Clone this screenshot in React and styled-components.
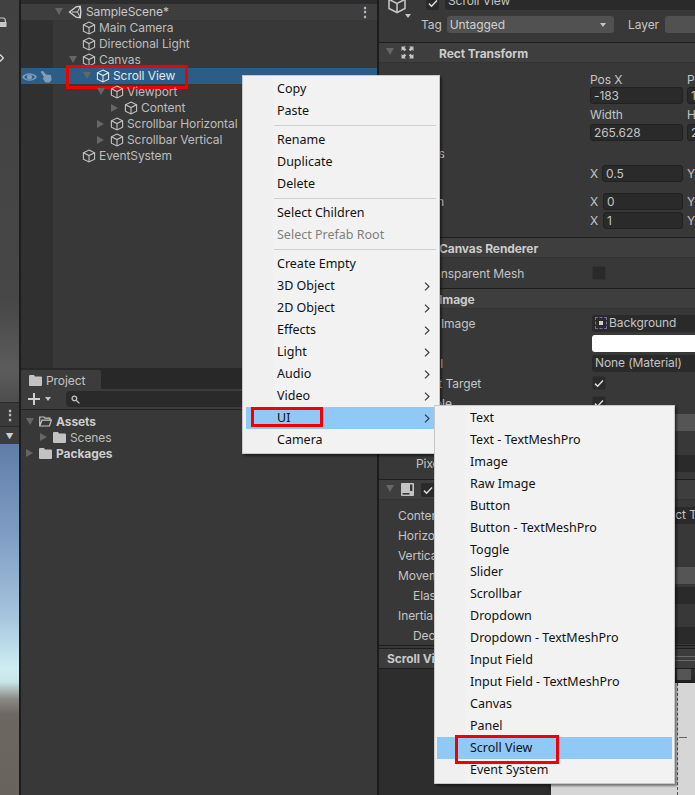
import React from "react";
import styled, { createGlobalStyle } from "styled-components";

const GlobalStyle = createGlobalStyle`
  html, body {
    margin: 0;
    padding: 0;
    background: #282828;
  }
`;

const CubeIcon = ({ size = 14, color = "#c4c4c4" }) => (
  <svg width={size} height={size} viewBox="0 0 14 14" fill="none" stroke={color} strokeWidth="1.1">
    <path d="M7 1 L12.6 3.8 V10.2 L7 13 L1.4 10.2 V3.8 Z" />
    <path d="M1.4 3.8 L7 6.6 L12.6 3.8 M7 6.6 V13" />
  </svg>
);

const UnityIcon = () => (
  <svg width="14" height="14" viewBox="0 0 14 14" fill="none" stroke="#d4d4d4" strokeWidth="1.4">
    <path d="M1.5 7 L8.2 1.8 L12.2 1.2 L12.8 7 L12.2 12.8 L8.2 12.2 Z" />
    <path d="M4 7 H9.5 L12.2 1.6 M9.5 7 L12.2 12.4" strokeWidth="1" />
  </svg>
);

const EyeIcon = () => (
  <svg width="15" height="10" viewBox="0 0 15 10" fill="#7d9cb8">
    <path d="M0 5 C3 0 12 0 15 5 C12 10 3 10 0 5 Z M2 5 C4.5 8.4 10.5 8.4 13 5 C10.5 1.6 4.5 1.6 2 5 Z" />
    <circle cx="7.5" cy="5" r="2.6" />
  </svg>
);

const HandIcon = () => (
  <svg width="12" height="12" viewBox="0 0 12 12" fill="#7d9cb8">
    <path d="M0.5 0.5 L3 0 L6 3.4 L11 4 L11.6 9 L9.6 11.6 H5.4 L2.6 7.2 L4 6.6 Z" />
  </svg>
);

const FolderIcon = ({ open }) => (
  <svg width="13" height="11" viewBox="0 0 13 11" fill={open ? "none" : "#c2c2c2"} stroke={open ? "#c2c2c2" : "none"}>
    {open ? (
      <path d="M0.7 10 V1 H5 L6 2.2 H11 V4 M0.7 10 L3 4.2 H12.4 L10.4 10 Z" strokeWidth="1.2" />
    ) : (
      <path d="M0 1 Q0 0 1 0 H5 L6 1.4 H12 Q13 1.4 13 2.4 V10 Q13 11 12 11 H1 Q0 11 0 10 Z" />
    )}
  </svg>
);

const RectIcon = () => (
  <svg width="13" height="13" viewBox="0 0 13 13" fill="#c4c4c4">
    <path d="M0.5 0.5 H5 L3.7 1.8 L5.2 3.6 L3.6 5.2 L1.8 3.7 L0.5 5 Z" />
    <path d="M12.5 0.5 H8 L9.3 1.8 L7.8 3.6 L9.4 5.2 L11.2 3.7 L12.5 5 Z" />
    <path d="M0.5 12.5 H5 L3.7 11.2 L5.2 9.4 L3.6 7.8 L1.8 9.3 L0.5 8 Z" />
    <path d="M12.5 12.5 H8 L9.3 11.2 L7.8 9.4 L9.4 7.8 L11.2 9.3 L12.5 8 Z" />
  </svg>
);

const ScrollIcon = () => (
  <svg width="13" height="13" viewBox="0 0 13 13">
    <rect width="13" height="13" rx="1" fill="#c4c4c4" />
    <rect x="9" y="1.5" width="2.4" height="6.5" fill="#383838" />
    <rect x="1.5" y="10" width="7" height="1.6" fill="#383838" />
  </svg>
);

const SearchIcon = () => (
  <svg width="9" height="9" viewBox="0 0 9 9" fill="none" stroke="#c4c4c4" strokeWidth="1.3">
    <circle cx="3.4" cy="3.4" r="2.3" />
    <path d="M5.2 5.2 L8.4 8.4" />
  </svg>
);

const CheckIcon = () => (
  <svg width="10" height="9" viewBox="0 0 10 9" fill="none" stroke="#dcdcdc" strokeWidth="1.5">
    <path d="M1 4.6 L3.6 7.2 L9 1.4" />
  </svg>
);

const Chevron = () => (
  <svg width="6" height="9" viewBox="0 0 6 9" fill="none" stroke="#333" strokeWidth="1.1">
    <path d="M1 0.6 L5 4.5 L1 8.4" />
  </svg>
);

const LockMark = () => (
  <svg width="7" height="10" viewBox="0 0 7 10">
    <path d="M0 1 H3 Q5.4 1 5.4 4 V5" fill="none" stroke="#c8c8c8" strokeWidth="1.2" />
    <rect x="0" y="5" width="6.5" height="5" fill="#c8c8c8" />
  </svg>
);

const CloseMark = () => (
  <svg width="4" height="8" viewBox="0 0 4 8" fill="none" stroke="#e0e0e0" strokeWidth="1.3">
    <path d="M0 0.5 L3.4 4 L0 7.5 M3.4 0.5 L3.4 0.5" />
  </svg>
);

const Page = styled.div`
  position: relative;
  display: flex;
  width: 695px;
  height: 795px;
  overflow: hidden;
  font-family: Inter, "Liberation Sans", sans-serif;
  font-size: 12px;
  letter-spacing: -0.08px;
  color: #c4c4c4;
`;

const SceneStrip = styled.div`
  display: flex;
  flex-direction: column;
  width: 19px;
  flex: none;
`;

const SceneGrey = styled.div`
  height: 402px;
  flex: none;
  display: flex;
  flex-direction: column;
  align-items: flex-start;
  padding-top: 17px;
  box-sizing: border-box;
  gap: 27px;
  background: linear-gradient(#414141, #474747 300px, #5c5c5c 370px, #4e4e4e 400px);
`;

const StripBar = styled.div`
  height: 23px;
  flex: none;
  background: #3a3a3a;
  border-top: 1px solid #2a2a2a;
  display: flex;
  align-items: center;
  justify-content: center;
  color: #c4c4c4;
  font-size: 14px;
  font-weight: 700;
`;

const StripBar2 = styled.div`
  height: 17px;
  flex: none;
  background: #3c3c3c;
  border-top: 1px solid #2a2a2a;
  display: flex;
  align-items: center;
  justify-content: center;
  color: #d0d0d0;
  font-size: 8px;
`;

const SkyView = styled.div`
  flex: 1;
  background: linear-gradient(
    #5f7da8 0,
    #7f9dc4 90px,
    #a4c3dc 170px,
    #cfeef2 225px,
    #c8e4e6 238px,
    #8a8a84 255px,
    #6d6762 270px,
    #69635e 100%
  );
`;

const LeftColumn = styled.div`
  width: 360px;
  flex: none;
  display: flex;
  flex-direction: column;
  border-left: 2px solid #1c1c1c;
  border-right: 2px solid #1c1c1c;
  box-sizing: border-box;
`;

const Hierarchy = styled.div`
  height: 368px;
  flex: none;
  padding-top: 4px;
  box-sizing: border-box;
  background: #2c2c2c;
  display: flex;
  flex-direction: column;
`;

const SceneRow = styled.div`
  height: 16px;
  flex: none;
  display: flex;
  align-items: center;
  padding-left: 34px;
  padding-bottom: 1px;
  box-sizing: border-box;
  background: #3e3e3e;
  color: #c8c8c8;
`;

const SceneDots = styled.span`
  margin-left: auto;
  margin-right: 6px;
  font-weight: 700;
  line-height: 1;
`;

const TreeBody = styled.div`
  flex: 1;
  background: linear-gradient(90deg, #303030 32px, #383838 32px);
`;

const Row = styled.div`
  position: relative;
  height: 16px;
  box-sizing: border-box;
  display: flex;
  align-items: center;
  padding-left: ${(p) => 48 + p.$depth * 14}px;
  padding-bottom: 1px;
  background: ${(p) => (p.$selected ? "#2c5d87" : "transparent")};
  color: ${(p) => (p.$selected ? "#e6e6e6" : "#bdbdbd")};
  white-space: nowrap;
`;

const Foldout = styled.span`
  width: 13px;
  flex: none;
  display: inline-flex;
  align-items: center;
  &::before {
    content: "";
    ${(p) =>
      p.$open
        ? `border-left: 4px solid transparent;
           border-right: 4px solid transparent;
           border-top: 7px solid #666;`
        : p.$closed
        ? `border-top: 4px solid transparent;
           border-bottom: 4px solid transparent;
           border-left: 7px solid #666;`
        : ""}
  }
`;

const RowIcon = styled.span`
  display: inline-flex;
  margin-right: ${(p) => p.$gap ?? 3}px;
`;

const RowGutter = styled.span`
  position: absolute;
  left: 1px;
  top: 3px;
  display: flex;
  gap: 3px;
  align-items: center;
`;

const RedBox = styled.span`
  position: absolute;
  left: ${(p) => p.$l}px;
  top: ${(p) => p.$t}px;
  width: ${(p) => p.$w}px;
  height: ${(p) => p.$h}px;
  border: 3px solid #f00000;
  box-sizing: border-box;
  pointer-events: none;
`;

const Project = styled.div`
  flex: 1;
  margin-top: 2px;
  display: flex;
  flex-direction: column;
  background: #383838;
`;

const TabStrip = styled.div`
  height: 19px;
  flex: none;
  background: #282828;
  display: flex;
`;

const Tab = styled.div`
  width: 80px;
  display: flex;
  align-items: center;
  gap: 4px;
  padding: 1px 0 0 8px;
  box-sizing: border-box;
  background: #3c3c3c;
  border-radius: 2px 2px 0 0;
`;

const ProjectBar = styled.div`
  height: 21px;
  flex: none;
  display: flex;
  align-items: center;
  padding-left: 7px;
  background: #3c3c3c;
  border-bottom: 1px solid #232323;
  box-sizing: border-box;
`;

const PlusMark = styled.span`
  width: 12px;
  height: 12px;
  flex: none;
  background:
    linear-gradient(#cfcfcf, #cfcfcf) center / 12px 2px no-repeat,
    linear-gradient(#cfcfcf, #cfcfcf) center / 2px 12px no-repeat;
`;

const SmallArrow = styled.span`
  margin-left: 5px;
  border-left: 3.5px solid transparent;
  border-right: 3.5px solid transparent;
  border-top: 4px solid ${(p) => p.$color || "#c4c4c4"};
`;

const SearchField = styled.div`
  flex: 1;
  height: 16px;
  margin-left: 15px;
  padding-left: 5px;
  display: flex;
  align-items: center;
  background: #2a2a2a;
  border-radius: 4px;
`;

const FileTree = styled.div`
  padding-top: 3px;
`;

const FileRow = styled.div`
  height: 16px;
  display: flex;
  align-items: center;
  padding-left: ${(p) => 5 + p.$depth * 14}px;
  font-weight: ${(p) => (p.$bold ? 700 : 400)};
  color: ${(p) => (p.$bold ? "#cdcdcd" : "#bdbdbd")};
`;

const Inspector = styled.div`
  flex: 1;
  min-width: 0;
  display: flex;
  flex-direction: column;
  background: #383838;
  overflow: hidden;
`;

const NameRow = styled.div`
  height: 10px;
  flex: none;
  display: flex;
  align-items: flex-end;
  padding-left: 47px;
  position: relative;
`;

const NameCheck = styled.span`
  width: 13px;
  height: 16px;
  flex: none;
  background: #2a2a2a;
  border-radius: 2px;
  display: flex;
  align-items: flex-end;
  justify-content: center;
  padding-bottom: 2px;
  box-sizing: border-box;
`;

const NameField = styled.div`
  flex: 1;
  height: 16px;
  margin-left: 6px;
  padding-left: 3px;
  line-height: 13px;
  background: #2a2a2a;
  border-radius: 3px 0 0 3px;
  font-size: 12px;
`;

const TopCube = styled.span`
  position: absolute;
  left: 8px;
  top: -6px;
`;

const CubeArrow = styled.span`
  position: absolute;
  left: 26px;
  top: 14px;
  border-left: 3.5px solid transparent;
  border-right: 3.5px solid transparent;
  border-top: 4px solid #c4c4c4;
`;

const TagRow = styled.div`
  height: 18px;
  margin-top: 6px;
  margin-bottom: 8px;
  flex: none;
  display: flex;
  align-items: center;
  padding: 0 0 1px 42px;
  box-sizing: border-box;
`;

const TagSelect = styled.div`
  width: 194px;
  height: 17px;
  margin-left: 5px;
  padding: 0 8px 0 3px;
  box-sizing: border-box;
  display: flex;
  align-items: center;
  justify-content: space-between;
  background: #515151;
  border-radius: 3px;
  color: #d0d0d0;
`;

const LayerLabel = styled.span`
  margin-left: 14px;
`;

const LayerBox = styled.span`
  width: 30px;
  height: 17px;
  margin-left: 6px;
  flex: none;
  background: #515151;
  border-radius: 3px 0 0 3px;
`;

const SectionHead = styled.div`
  height: 21px;
  flex: none;
  box-sizing: border-box;
  display: flex;
  align-items: center;
  position: relative;
  background: #3e3e3e;
  border-top: 1px solid #1e1e1e;
  border-bottom: 1px solid #333;
  padding-left: ${(p) => p.$pad ?? 60}px;
  padding-top: 1px;
  font-weight: 700;
  color: #cbcbcb;
`;

const HeadArrow = styled.span`
  position: absolute;
  left: 7px;
  top: 5px;
  border-left: 4px solid transparent;
  border-right: 4px solid transparent;
  border-top: 7px solid #666;
`;

const HeadIcon = styled.span`
  position: absolute;
  left: 22px;
  top: 3px;
  display: flex;
`;

const HeadCheck = styled.span`
  position: absolute;
  left: 42px;
  top: 3px;
  width: 14px;
  height: 14px;
  background: #2a2a2a;
  border-radius: 2px;
  display: flex;
  align-items: center;
  justify-content: center;
`;

const RectBody = styled.div`
  height: 174px;
  flex: none;
  display: grid;
  grid-template-columns: 188px 93px 60px;
  column-gap: 4px;
  grid-template-rows: 14px 19px 18px 19px 22px 18px 10px 19px 19px;
  padding: 9px 0 0 19px;
  box-sizing: border-box;
  align-items: center;
`;

const Axis = styled.div`
  display: flex;
  align-items: center;
  gap: ${(p) => p.$gap ?? 4}px;
`;

const Field = styled.div`
  flex: 1;
  min-width: 0;
  height: 17px;
  padding-left: 3px;
  line-height: 16px;
  white-space: nowrap;
  overflow: hidden;
  box-sizing: border-box;
  background: ${(p) => p.$bg || "#2a2a2a"};
  color: ${(p) => p.$color || "#c4c4c4"};
  border-radius: 3px;
  border: 1px solid #212121;
`;

const Prop = styled.div`
  height: ${(p) => p.$h ?? 20}px;
  flex: none;
  display: grid;
  grid-template-columns: ${(p) => 194 - (p.$indent ?? 19) + 19}px 1fr;
  align-items: center;
  padding-left: ${(p) => p.$indent ?? 19}px;
  white-space: nowrap;
`;

const PropField = styled(Field)`
  width: 120px;
  flex: none;
  border: none;
  display: flex;
  align-items: center;
  gap: 2px;
`;

const CheckBox = styled.span`
  width: 14px;
  height: 14px;
  display: flex;
  align-items: center;
  justify-content: center;
  background: #2a2a2a;
  border-radius: 2px;
  border: 1px solid #313131;
  box-sizing: border-box;
`;

const SpriteDot = styled.span`
  width: 10px;
  height: 10px;
  flex: none;
  border: 1px dashed #7c68a8;
  display: flex;
  align-items: center;
  justify-content: center;
  &::after {
    content: "";
    width: 4px;
    height: 4px;
    background: #cfcfcf;
  }
`;

const Gap = styled.div`
  height: ${(p) => p.$h}px;
  flex: none;
`;

const Divider = styled.div`
  height: 1px;
  flex: none;
  background: #1e1e1e;
`;

const PreviewBar = styled.div`
  height: 21px;
  flex: none;
  margin-top: 2px;
  display: flex;
  align-items: center;
  padding: 0 0 1px 8px;
  background: #3c3c3c;
  border-top: 1px solid #1e1e1e;
  border-bottom: 1px solid #1e1e1e;
  box-sizing: border-box;
  font-weight: 700;
  color: #c8c8c8;
`;

const BarGrip = styled.span`
  margin-left: auto;
  width: 20px;
  height: 3px;
  border-top: 1px solid #6a6a6a;
  border-bottom: 1px solid #6a6a6a;
`;

const Preview = styled.div`
  flex: 1;
  display: flex;
  background: #2d2d2d;
  padding: 14px 0 0 172px;
  overflow: hidden;
`;

const PreviewSheet = styled.div`
  flex: 1;
  position: relative;
  background: #d6d6d6;
  border-radius: 14px 0 0 0;
  box-shadow: 0 -3px 5px #1a1a1a;
`;

const PreviewChip = styled.span`
  position: absolute;
  left: 126px;
  top: -14px;
  width: 14px;
  height: 11px;
  background: #555;
`;

const DashLine = styled.span`
  position: absolute;
  left: 126px;
  top: 0;
  bottom: 0;
  border-left: 1px dashed #555;
`;

const CrossTick = styled.span`
  position: absolute;
  left: 128px;
  top: 54px;
  width: 8px;
  height: 1px;
  background: #666;
`;

const Menu = styled.div`
  position: absolute;
  left: ${(p) => p.$x}px;
  top: ${(p) => p.$y}px;
  width: ${(p) => p.$w}px;
  padding: ${(p) => p.$padTop}px 2px 2px ${(p) => p.$padLeft}px;
  box-sizing: border-box;
  background: linear-gradient(90deg, #f0f0f0 30px, #f2f2f2 30px);
  border: 1px solid #c8c8c8;
  box-shadow: 2px 2px 2px rgba(0, 0, 0, 0.45);
  font-family: "Noto Sans", "Open Sans", sans-serif;
  font-size: 12.5px;
  letter-spacing: 0;
  color: #111;
`;

const MenuItem = styled.div`
  position: relative;
  height: 22px;
  line-height: 22px;
  padding-left: ${(p) => p.$indent}px;
  display: flex;
  align-items: center;
  justify-content: space-between;
  padding-right: 7px;
  background: ${(p) => (p.$active ? "#90c8f6" : "transparent")};
  color: ${(p) => (p.$disabled ? "#7f7f7f" : "#111")};
  white-space: nowrap;
`;

const MenuRule = styled.div`
  height: 1px;
  margin: 3px 1px 3px 28px;
  background: #d0d0d0;
`;

const tree = [
  { name: "Main Camera", depth: 0 },
  { name: "Directional Light", depth: 0 },
  { name: "Canvas", depth: 0, open: true },
  { name: "Scroll View", depth: 1, open: true, selected: true },
  { name: "Viewport", depth: 2, open: true },
  { name: "Content", depth: 3, closed: true },
  { name: "Scrollbar Horizontal", depth: 2, closed: true },
  { name: "Scrollbar Vertical", depth: 2, closed: true },
  { name: "EventSystem", depth: 0 },
];

const contextMenu = [
  ["Copy", "Paste"],
  ["Rename", "Duplicate", "Delete"],
  ["Select Children", "Select Prefab Root"],
  ["Create Empty", "3D Object", "2D Object", "Effects", "Light", "Audio", "Video", "UI", "Camera"],
];

const withArrow = ["3D Object", "2D Object", "Effects", "Light", "Audio", "Video", "UI"];

const uiMenu = [
  "Text",
  "Text - TextMeshPro",
  "Image",
  "Raw Image",
  "Button",
  "Button - TextMeshPro",
  "Toggle",
  "Slider",
  "Scrollbar",
  "Dropdown",
  "Dropdown - TextMeshPro",
  "Input Field",
  "Input Field - TextMeshPro",
  "Canvas",
  "Panel",
  "Scroll View",
  "Event System",
];

export default function App() {
  return (
    <Page>
      <GlobalStyle />
      <SceneStrip>
        <SceneGrey>
          <LockMark />
          <CloseMark />
        </SceneGrey>
        <StripBar>⋮</StripBar>
        <StripBar2>▼</StripBar2>
        <SkyView />
      </SceneStrip>

      <LeftColumn>
        <Hierarchy>
          <SceneRow>
            <Foldout $open />
            <RowIcon $gap={4}>
              <UnityIcon />
            </RowIcon>
            SampleScene*
            <SceneDots>⋮</SceneDots>
          </SceneRow>
          <TreeBody>
            {tree.map((item) => (
              <Row key={item.name} $depth={item.depth} $selected={item.selected}>
                {item.selected && (
                  <RowGutter>
                    <EyeIcon />
                    <HandIcon />
                  </RowGutter>
                )}
                <Foldout $open={item.open} $closed={item.closed} />
                <RowIcon>
                  <CubeIcon color={item.selected ? "#e6e6e6" : "#c4c4c4"} />
                </RowIcon>
                {item.name}
                {item.selected && <RedBox $l={45} $t={-3} $w={122} $h={24} />}
              </Row>
            ))}
          </TreeBody>
        </Hierarchy>

        <Project>
          <TabStrip>
            <Tab>
              <FolderIcon />
              Project
            </Tab>
          </TabStrip>
          <ProjectBar>
            <PlusMark />
            <SmallArrow />
            <SearchField>
              <SearchIcon />
            </SearchField>
          </ProjectBar>
          <FileTree>
            <FileRow $depth={0} $bold>
              <Foldout $open />
              <RowIcon $gap={4}>
                <FolderIcon open />
              </RowIcon>
              Assets
            </FileRow>
            <FileRow $depth={1}>
              <Foldout $closed />
              <RowIcon $gap={4}>
                <FolderIcon />
              </RowIcon>
              Scenes
            </FileRow>
            <FileRow $depth={0} $bold>
              <Foldout $closed />
              <RowIcon $gap={4}>
                <FolderIcon />
              </RowIcon>
              Packages
            </FileRow>
          </FileTree>
        </Project>
      </LeftColumn>

      <Inspector>
        <NameRow>
          <TopCube>
            <CubeIcon size={20} />
          </TopCube>
          <CubeArrow />
          <NameCheck>
            <CheckIcon />
          </NameCheck>
          <NameField>Scroll View</NameField>
        </NameRow>
        <TagRow>
          Tag
          <TagSelect>
            Untagged
            <SmallArrow />
          </TagSelect>
          <LayerLabel>Layer</LayerLabel>
          <LayerBox />
        </TagRow>

        <SectionHead>
          <HeadArrow />
          <HeadIcon>
            <RectIcon />
          </HeadIcon>
          Rect Transform
        </SectionHead>
        <RectBody>
          <span />
          <span>Pos X</span>
          <span>Pos Y</span>
          <span />
          <Field>-183</Field>
          <Field>1</Field>
          <span />
          <span>Width</span>
          <span>Height</span>
          <span />
          <Field>265.628</Field>
          <Field>2</Field>
          <span>Anchors</span>
          <span />
          <span />
          <span>Pivot</span>
          <Axis>
            X
            <Field>0.5</Field>
          </Axis>
          <span>Y</span>
          <span />
          <span />
          <span />
          <span>Rotation</span>
          <Axis $gap={5}>
            X
            <Field>0</Field>
          </Axis>
          <span>Y</span>
          <span>Scale</span>
          <Axis $gap={5}>
            X
            <Field>1</Field>
          </Axis>
          <span>Y</span>
        </RectBody>

        <SectionHead>Canvas Renderer</SectionHead>
        <Prop $h={30}>
          Cull Transparent Mesh
          <CheckBox />
        </Prop>
        <SectionHead>Image</SectionHead>
        <Gap $h={4} />
        <Prop>
          Source Image
          <PropField>
            <SpriteDot />
            Background
          </PropField>
        </Prop>
        <Prop>
          Color
          <PropField $bg="#fff" />
        </Prop>
        <Prop>
          Material
          <PropField>None (Material)</PropField>
        </Prop>
        <Prop>
          Raycast Target
          <CheckBox>
            <CheckIcon />
          </CheckBox>
        </Prop>
        <Prop>
          Maskable
          <CheckBox>
            <CheckIcon />
          </CheckBox>
        </Prop>
        <Prop $h={18}>
          Image Type
          <PropField $bg="#555" />
        </Prop>
        <Gap $h={22} />
        <Prop $indent={37}>
          Pixels Per Unit
          <PropField />
        </Prop>
        <Gap $h={6} />
        <SectionHead>
          <HeadArrow />
          <HeadIcon>
            <ScrollIcon />
          </HeadIcon>
          <HeadCheck>
            <CheckIcon />
          </HeadCheck>
          Scroll Rect
        </SectionHead>
        <Gap $h={5} />
        <Prop>
          Content
          <PropField>
            <SpriteDot />
            Content (Rect Transform)
          </PropField>
        </Prop>
        <Prop>Horizontal</Prop>
        <Prop>Vertical</Prop>
        <Prop>
          Movement Type
          <PropField $bg="#555" />
        </Prop>
        <Prop $indent={34}>
          Elasticity
          <PropField />
        </Prop>
        <Prop>Inertia</Prop>
        <Prop $indent={34}>
          Deceleration Rate
          <PropField />
        </Prop>
        <Divider />
        <PreviewBar>
          Scroll View
          <BarGrip />
        </PreviewBar>
        <Preview>
          <PreviewSheet>
            <PreviewChip />
            <DashLine />
            <CrossTick />
          </PreviewSheet>
        </Preview>
      </Inspector>

      <Menu $x={242} $y={75} $w={198} $padTop={2} $padLeft={3}>
        {contextMenu.map((group, i) => (
          <React.Fragment key={group[0]}>
            {i > 0 && <MenuRule />}
            {group.map((label) => (
              <MenuItem key={label} $indent={31} $active={label === "UI"} $disabled={label === "Select Prefab Root"}>
                {label}
                {withArrow.includes(label) && <Chevron />}
                {label === "UI" && <RedBox $l={5} $t={0} $w={72} $h={20} />}
              </MenuItem>
            ))}
          </React.Fragment>
        ))}
      </Menu>

      <Menu $x={434} $y={405} $w={241} $padTop={1} $padLeft={2}>
        {uiMenu.map((label) => (
          <MenuItem key={label} $indent={33} $active={label === "Scroll View"}>
            {label}
            {label === "Scroll View" && <RedBox $l={18} $t={-2} $w={104} $h={29} />}
          </MenuItem>
        ))}
      </Menu>
    </Page>
  );
}
